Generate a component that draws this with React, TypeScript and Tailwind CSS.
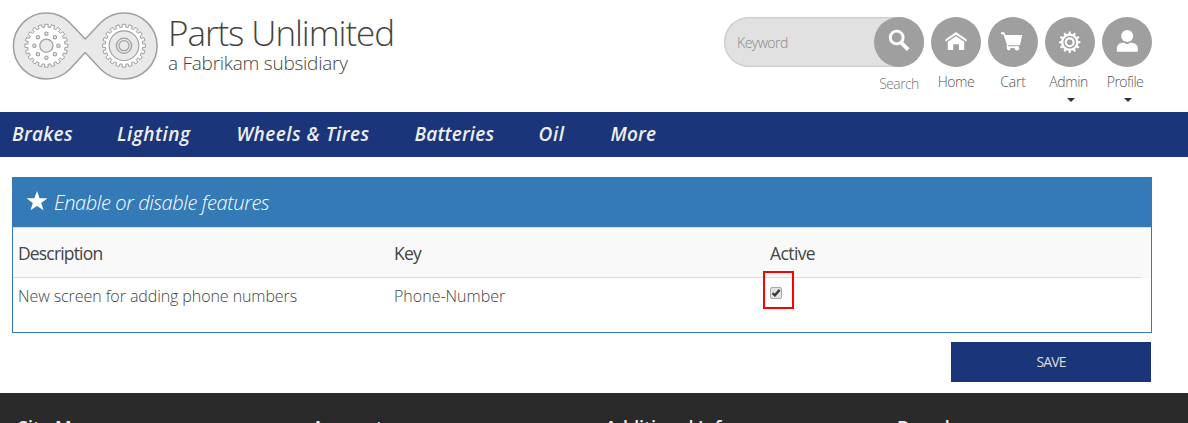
import React from "react";

const gearPath = (cx: number, cy: number, outer: number, inner: number, teeth: number, duty = 0.25) => {
  const pts: string[] = [];
  const step = (Math.PI * 2) / teeth;
  for (let i = 0; i < teeth; i++) {
    const a = i * step - Math.PI / 2;
    const at = (r: number, t: number) =>
      `${(cx + r * Math.cos(t)).toFixed(2)},${(cy + r * Math.sin(t)).toFixed(2)}`;
    pts.push(
      at(inner, a - step * (duty + 0.02)),
      at(outer, a - step * (duty - 0.02)),
      at(outer, a + step * (duty - 0.02)),
      at(inner, a + step * (duty + 0.02)),
    );
  }
  return `M${pts.join("L")}Z`;
};

const Logo = () => (
  <svg width="148" height="70" viewBox="0 0 148 70" className="block shrink-0" stroke="#9f9f9f" fill="#e9e9e9">
    <path
      d="M57.8 11.7 73.2 28 88.7 11.7A33 33 0 1 1 88.7 58.3L73.2 41.5 57.8 58.3A33 33 0 1 1 57.8 11.7Z"
      strokeWidth="1.5"
      strokeLinejoin="round"
    />
    <path d={gearPath(34.4, 34.7, 21.5, 18.6, 20, 0.27)} fill="#fff" strokeWidth="1" />
    <circle cx="34.4" cy="34.7" r="6.6" strokeWidth="1.2" />
    {[0, 1, 2, 3, 4, 5, 6, 7].map((i) => (
      <circle
        key={i}
        cx={34.4 + 12 * Math.cos((i * Math.PI) / 4)}
        cy={34.7 + 12 * Math.sin((i * Math.PI) / 4)}
        r="1.7"
        strokeWidth="1.1"
      />
    ))}
    <path d={gearPath(112, 34.7, 21.5, 18.6, 20, 0.27)} fill="#fff" strokeWidth="1" />
    <circle cx="112" cy="34.7" r="14.8" strokeWidth="1.1" />
    <circle cx="112" cy="34.7" r="7.6" strokeWidth="1.2" />
    <circle cx="112" cy="34.7" r="5" strokeWidth="1.2" />
  </svg>
);

const SearchIcon = () => (
  <svg width="50" height="50" viewBox="0 0 50 50" fill="none" stroke="#fff">
    <circle cx="22.7" cy="20.5" r="6.4" strokeWidth="2.9" />
    <path d="M26.5 25 34.2 32.7" strokeWidth="3.8" />
  </svg>
);

const HomeIcon = () => (
  <svg width="50" height="50" viewBox="0 0 50 50" fill="#fff">
    <path d="M25 15 35.5 22.2V24.8L25 17.8 14.5 24.8V22.2Z" />
    <path d="M16.8 24.8 25 19.3 33.2 24.8V33H28V27.3H22.3V33H16.8Z" />
  </svg>
);

const CartIcon = () => (
  <svg width="50" height="50" viewBox="0 0 50 50" fill="#fff">
    <path d="M13 15.3H16.2L17.5 18H34.2L32 28.3H20.2L20 29.3H29.5V31H19.2L18.4 29.3 19.2 28.2 15.3 17.2H13Z" />
    <circle cx="20.7" cy="31.6" r="1.8" />
    <circle cx="29" cy="31.2" r="2.3" />
  </svg>
);

const GearIcon = () => (
  <svg width="50" height="50" viewBox="0 0 50 50">
    <path d={gearPath(24.7, 25.2, 10.8, 8.7, 12, 0.2)} fill="#fff" />
    <circle cx="24.7" cy="25.2" r="5.7" fill="none" stroke="#9f9f9f" strokeWidth="1.4" />
    <circle cx="24.7" cy="25.2" r="2.8" fill="#9f9f9f" />
  </svg>
);

const ProfileIcon = () => (
  <svg width="50" height="50" viewBox="0 0 50 50" fill="#fff">
    <circle cx="25.2" cy="19" r="6" />
    <path d="M14.8 34.7V31Q15.2 26.7 19.5 25.9L21.3 25.6Q25.2 28.4 29 25.6L31 25.9Q35.4 26.7 35.8 31V34.7Z" />
  </svg>
);

const actions = [
  { label: "Home", icon: <HomeIcon />, caret: false, style: "tracking-[-0.4px]" },
  { label: "Cart", icon: <CartIcon />, caret: false, style: "tracking-[-0.2px]" },
  { label: "Admin", icon: <GearIcon />, caret: true, style: "tracking-[-0.4px] mr-[3px]" },
  { label: "Profile", icon: <ProfileIcon />, caret: true, style: "tracking-[-0.5px] mr-[4px]" },
];

const Action = ({ label, icon, caret, style }: (typeof actions)[number]) => (
  <div className="flex w-[50px] flex-col items-center">
    <div className="size-[50px] rounded-full bg-[#9f9f9f]">{icon}</div>
    <span className={`mt-[5px] text-[14px] leading-5 text-[#555] ${style}`}>{label}</span>
    {caret && (
      <svg width="8" height="4" viewBox="0 0 8 4" className="mt-[6px] ml-[2px]" fill="#333">
        <path d="M0 0H8L4 4Z" />
      </svg>
    )}
  </div>
);

export default function App() {
  return (
    <div className="h-[423px] w-[1188px] overflow-hidden bg-white font-['Open_Sans','Noto_Sans',sans-serif] font-light text-[#444]">
      <header className="flex h-[112px] pl-3">
        <div className="pt-[11px]">
          <Logo />
        </div>
        <div className="flex flex-col pt-[13px] pl-[8px] whitespace-nowrap">
          <h1 className="text-[35px] leading-[40px] tracking-[-1.07px]">Parts Unlimited</h1>
          <p className="text-[19px] leading-[20px] tracking-[-0.25px]">a Fabrikam subsidiary</p>
        </div>
        <div className="mr-9 ml-auto flex gap-[7px] pt-[17px]">
          <div className="flex w-[200px] flex-col items-end">
            <div className="flex h-[50px] w-[200px] items-center justify-between rounded-full bg-[#e1e1e1] shadow-[inset_0_0_2px_#999]">
              <span className="pl-[13px] text-[14px] tracking-[-0.5px] text-[#888]">Keyword</span>
              <div className="size-[50px] rounded-full bg-[#9f9f9f]">
                <SearchIcon />
              </div>
            </div>
            <span className="mt-[7px] w-[50px] text-center text-[14px] leading-5 tracking-[-0.6px] text-[#777]">Search</span>
          </div>
          {actions.map((a) => (
            <Action key={a.label} {...a} />
          ))}
        </div>
      </header>

      <nav className="flex h-[45px] items-center bg-[#1b357a] pb-px pl-3 text-[19px] font-semibold whitespace-nowrap text-[#eee] italic">
        <a className="w-[105px] tracking-[0.3px]">Brakes</a>
        <a className="w-[119.5px] tracking-[0.5px]">Lighting</a>
        <a className="w-[178px] tracking-[0.5px]">Wheels &amp; Tires</a>
        <a className="w-[124px] tracking-[0.15px]">Batteries</a>
        <a className="w-[72px] tracking-[0.6px]">Oil</a>
        <a className="tracking-[0.15px]">More</a>
      </nav>

      <main className="h-[236px] pt-5 pl-3">
        <section className="h-[156px] w-[1140px] border border-[#337ab7]">
          <div className="flex h-[49px] items-center bg-[#337ab7] pl-[13px] text-white">
            <svg width="22" height="20" viewBox="0 0 22 20" fill="#fff" className="-mt-1">
              <path d="M11 0 13.6 7.3H21.5L15.2 12 17.5 19.2 11 14.9 4.5 19.2 6.8 12 .5 7.3H8.4Z" />
            </svg>
            <h2 className="mt-px pl-[6px] text-[20px] tracking-[-0.38px] italic">Enable or disable features</h2>
          </div>
          <div className="flex h-[51px] border-t border-[#ddd] bg-[#f9f9f9]">
            <div className="flex h-[50px] w-[1128px] items-center border-b border-[#ddd] pt-px pl-[5px] text-[17.5px] font-normal tracking-[-0.83px] text-[#444]">
              <span className="w-[376px]">Description</span>
              <span className="w-[376px]">Key</span>
              <span className="tracking-[-0.6px]">Active</span>
            </div>
          </div>
          <div className="flex pl-[5px] text-[16px] leading-[36px]">
            <span className="w-[376px] tracking-[-0.08px]">New screen for adding phone numbers</span>
            <span className="w-[376px]">Phone-Number</span>
            <div className="relative pt-[9px]">
              <div className="flex size-[12px] items-center justify-center rounded-[2px] border border-[#aaa] bg-[#e2e2e2]">
                <svg width="10" height="10" viewBox="0 0 10 10" fill="none" stroke="#3c3c3c" strokeWidth="2.4">
                  <path d="M1.5 5.2 3.9 7.4 8.6 1.9" />
                </svg>
              </div>
              <div className="absolute -top-[7px] -left-[7px] h-[38px] w-[31px] border-2 border-[#f00]" />
            </div>
          </div>
        </section>
        <button className="mt-[9px] ml-[939px] block h-10 w-[200px] bg-[#1b357a] pb-[2px] text-[14px] font-normal tracking-[-0.9px] text-[#ddd]">
          SAVE
        </button>
      </main>

      <footer className="flex h-[60px] bg-[#2a2a2a] pt-[22px] pl-[18px] text-[18px] leading-6 font-semibold whitespace-nowrap text-[#eee]">
        <span className="w-[294px]">Site Map</span>
        <span className="w-[293px]">Account</span>
        <span className="w-[292px] tracking-[-0.1px]">Additional Info</span>
        <span>Brands</span>
      </footer>
    </div>
  );
}
